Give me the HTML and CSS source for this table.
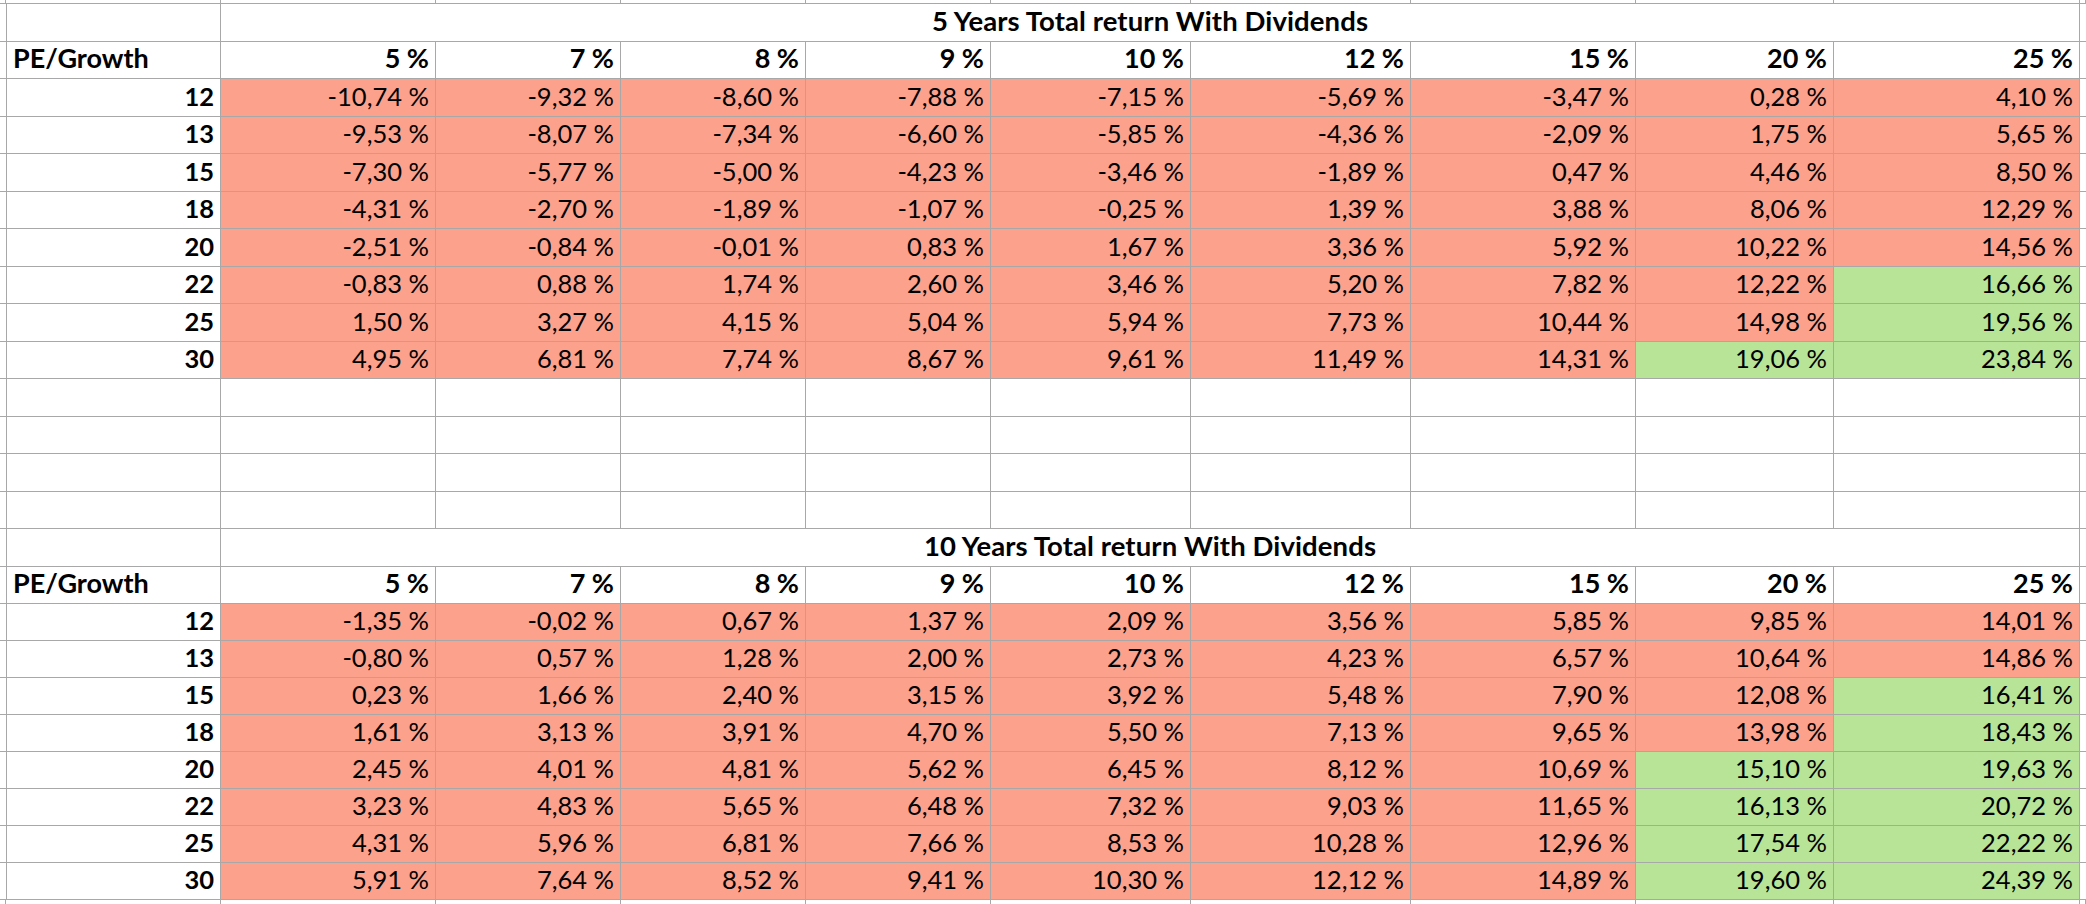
FILE: index.html
```html
<!DOCTYPE html>
<html>
<head>
<meta charset="utf-8">
<title>Total return with dividends</title>
<link rel="stylesheet" href="styles.css">
</head>
<body>
<div class="sheet">
  <div class="row edge"><div></div><div></div><div></div><div></div><div></div><div></div><div></div><div></div><div></div><div></div><div></div><div></div></div>

  <div class="row tr"><div></div><div></div><div class="ttl">5 Years Total return With Dividends</div><div></div></div>
  <div class="row hr"><div></div><div class="pe">PE/Growth</div><div class="h">5 %</div><div class="h">7 %</div><div class="h">8 %</div><div class="h">9 %</div><div class="h">10 %</div><div class="h">12 %</div><div class="h">15 %</div><div class="h">20 %</div><div class="h">25 %</div><div></div></div>
  <div class="row dr"><div></div><div class="b">12</div><div class="r">-10,74 %</div><div class="r">-9,32 %</div><div class="r">-8,60 %</div><div class="r">-7,88 %</div><div class="r">-7,15 %</div><div class="r">-5,69 %</div><div class="r">-3,47 %</div><div class="r">0,28 %</div><div class="r">4,10 %</div><div></div></div>
  <div class="row dr"><div></div><div class="b">13</div><div class="r">-9,53 %</div><div class="r">-8,07 %</div><div class="r">-7,34 %</div><div class="r">-6,60 %</div><div class="r">-5,85 %</div><div class="r">-4,36 %</div><div class="r">-2,09 %</div><div class="r">1,75 %</div><div class="r">5,65 %</div><div></div></div>
  <div class="row dr"><div></div><div class="b">15</div><div class="r">-7,30 %</div><div class="r">-5,77 %</div><div class="r">-5,00 %</div><div class="r">-4,23 %</div><div class="r">-3,46 %</div><div class="r">-1,89 %</div><div class="r">0,47 %</div><div class="r">4,46 %</div><div class="r">8,50 %</div><div></div></div>
  <div class="row dr"><div></div><div class="b">18</div><div class="r">-4,31 %</div><div class="r">-2,70 %</div><div class="r">-1,89 %</div><div class="r">-1,07 %</div><div class="r">-0,25 %</div><div class="r">1,39 %</div><div class="r">3,88 %</div><div class="r">8,06 %</div><div class="r">12,29 %</div><div></div></div>
  <div class="row dr"><div></div><div class="b">20</div><div class="r">-2,51 %</div><div class="r">-0,84 %</div><div class="r">-0,01 %</div><div class="r">0,83 %</div><div class="r">1,67 %</div><div class="r">3,36 %</div><div class="r">5,92 %</div><div class="r">10,22 %</div><div class="r">14,56 %</div><div></div></div>
  <div class="row dr"><div></div><div class="b">22</div><div class="r">-0,83 %</div><div class="r">0,88 %</div><div class="r">1,74 %</div><div class="r">2,60 %</div><div class="r">3,46 %</div><div class="r">5,20 %</div><div class="r">7,82 %</div><div class="r">12,22 %</div><div class="g">16,66 %</div><div></div></div>
  <div class="row dr"><div></div><div class="b">25</div><div class="r">1,50 %</div><div class="r">3,27 %</div><div class="r">4,15 %</div><div class="r">5,04 %</div><div class="r">5,94 %</div><div class="r">7,73 %</div><div class="r">10,44 %</div><div class="r">14,98 %</div><div class="g">19,56 %</div><div></div></div>
  <div class="row dr"><div></div><div class="b">30</div><div class="r">4,95 %</div><div class="r">6,81 %</div><div class="r">7,74 %</div><div class="r">8,67 %</div><div class="r">9,61 %</div><div class="r">11,49 %</div><div class="r">14,31 %</div><div class="g">19,06 %</div><div class="g">23,84 %</div><div></div></div>

  <div class="row dr"><div></div><div></div><div></div><div></div><div></div><div></div><div></div><div></div><div></div><div></div><div></div><div></div></div>
  <div class="row dr"><div></div><div></div><div></div><div></div><div></div><div></div><div></div><div></div><div></div><div></div><div></div><div></div></div>
  <div class="row dr"><div></div><div></div><div></div><div></div><div></div><div></div><div></div><div></div><div></div><div></div><div></div><div></div></div>
  <div class="row dr"><div></div><div></div><div></div><div></div><div></div><div></div><div></div><div></div><div></div><div></div><div></div><div></div></div>

  <div class="row tr"><div></div><div></div><div class="ttl">10 Years Total return With Dividends</div><div></div></div>
  <div class="row hr"><div></div><div class="pe">PE/Growth</div><div class="h">5 %</div><div class="h">7 %</div><div class="h">8 %</div><div class="h">9 %</div><div class="h">10 %</div><div class="h">12 %</div><div class="h">15 %</div><div class="h">20 %</div><div class="h">25 %</div><div></div></div>
  <div class="row dr2"><div></div><div class="b">12</div><div class="r">-1,35 %</div><div class="r">-0,02 %</div><div class="r">0,67 %</div><div class="r">1,37 %</div><div class="r">2,09 %</div><div class="r">3,56 %</div><div class="r">5,85 %</div><div class="r">9,85 %</div><div class="r">14,01 %</div><div></div></div>
  <div class="row dr2"><div></div><div class="b">13</div><div class="r">-0,80 %</div><div class="r">0,57 %</div><div class="r">1,28 %</div><div class="r">2,00 %</div><div class="r">2,73 %</div><div class="r">4,23 %</div><div class="r">6,57 %</div><div class="r">10,64 %</div><div class="r">14,86 %</div><div></div></div>
  <div class="row dr2"><div></div><div class="b">15</div><div class="r">0,23 %</div><div class="r">1,66 %</div><div class="r">2,40 %</div><div class="r">3,15 %</div><div class="r">3,92 %</div><div class="r">5,48 %</div><div class="r">7,90 %</div><div class="r">12,08 %</div><div class="g">16,41 %</div><div></div></div>
  <div class="row dr2"><div></div><div class="b">18</div><div class="r">1,61 %</div><div class="r">3,13 %</div><div class="r">3,91 %</div><div class="r">4,70 %</div><div class="r">5,50 %</div><div class="r">7,13 %</div><div class="r">9,65 %</div><div class="r">13,98 %</div><div class="g">18,43 %</div><div></div></div>
  <div class="row dr2"><div></div><div class="b">20</div><div class="r">2,45 %</div><div class="r">4,01 %</div><div class="r">4,81 %</div><div class="r">5,62 %</div><div class="r">6,45 %</div><div class="r">8,12 %</div><div class="r">10,69 %</div><div class="g">15,10 %</div><div class="g">19,63 %</div><div></div></div>
  <div class="row dr2"><div></div><div class="b">22</div><div class="r">3,23 %</div><div class="r">4,83 %</div><div class="r">5,65 %</div><div class="r">6,48 %</div><div class="r">7,32 %</div><div class="r">9,03 %</div><div class="r">11,65 %</div><div class="g">16,13 %</div><div class="g">20,72 %</div><div></div></div>
  <div class="row dr2"><div></div><div class="b">25</div><div class="r">4,31 %</div><div class="r">5,96 %</div><div class="r">6,81 %</div><div class="r">7,66 %</div><div class="r">8,53 %</div><div class="r">10,28 %</div><div class="r">12,96 %</div><div class="g">17,54 %</div><div class="g">22,22 %</div><div></div></div>
  <div class="row dr2"><div></div><div class="b">30</div><div class="r">5,91 %</div><div class="r">7,64 %</div><div class="r">8,52 %</div><div class="r">9,41 %</div><div class="r">10,30 %</div><div class="r">12,12 %</div><div class="r">14,89 %</div><div class="g">19,60 %</div><div class="g">24,39 %</div><div></div></div>

  <div class="row edge bottom"><div></div><div></div><div></div><div></div><div></div><div></div><div></div><div></div><div></div><div></div><div></div><div></div></div>
</div>
</body>
</html>
```

FILE: styles.css
```css
html, body {
  margin: 0;
  padding: 0;
  background: #ffffff;
}

body {
  width: 2086px;
  height: 904px;
  overflow: hidden;
  font-family: Lato, "Open Sans", sans-serif;
  font-size: 25.5px;
  color: #000000;
}

.sheet {
  display: flex;
  flex-direction: column;
}

.row {
  display: grid;
  grid-template-columns: 6px 215px 215px 185px 185px 185px 200px 220px 225px 198px 246px 6px;
}

.row > div {
  box-sizing: border-box;
  min-width: 0;
  border-right: 1px solid #a8a8a8;
  border-bottom: 1px solid #a8a8a8;
  display: flex;
  align-items: flex-end;
  justify-content: flex-end;
  padding: 0 6px 5px 0;
  line-height: 30px;
  white-space: nowrap;
  overflow: hidden;
}

.edge {
  height: 4px;
}

.edge > div {
  padding: 0;
}

.bottom > div {
  border-bottom: 0;
}

.tr {
  height: 38px;
}

.hr {
  height: 37px;
}

.dr {
  height: 37.5px;
}

.dr2 {
  height: 37px;
}

.row > .ttl {
  grid-column: span 9;
  justify-content: center;
  padding-right: 0;
  padding-left: 0;
  font-size: 27.5px;
  font-weight: 700;
  letter-spacing: 0.1px;
}

.row > .pe {
  justify-content: flex-start;
  padding-left: 7px;
  font-size: 27px;
  font-weight: 700;
}

.b {
  font-weight: 700;
}

.h {
  font-weight: 700;
  font-size: 27px;
}

.r {
  background: #fba18c;
}

.g {
  background: #b7e497;
}
```
